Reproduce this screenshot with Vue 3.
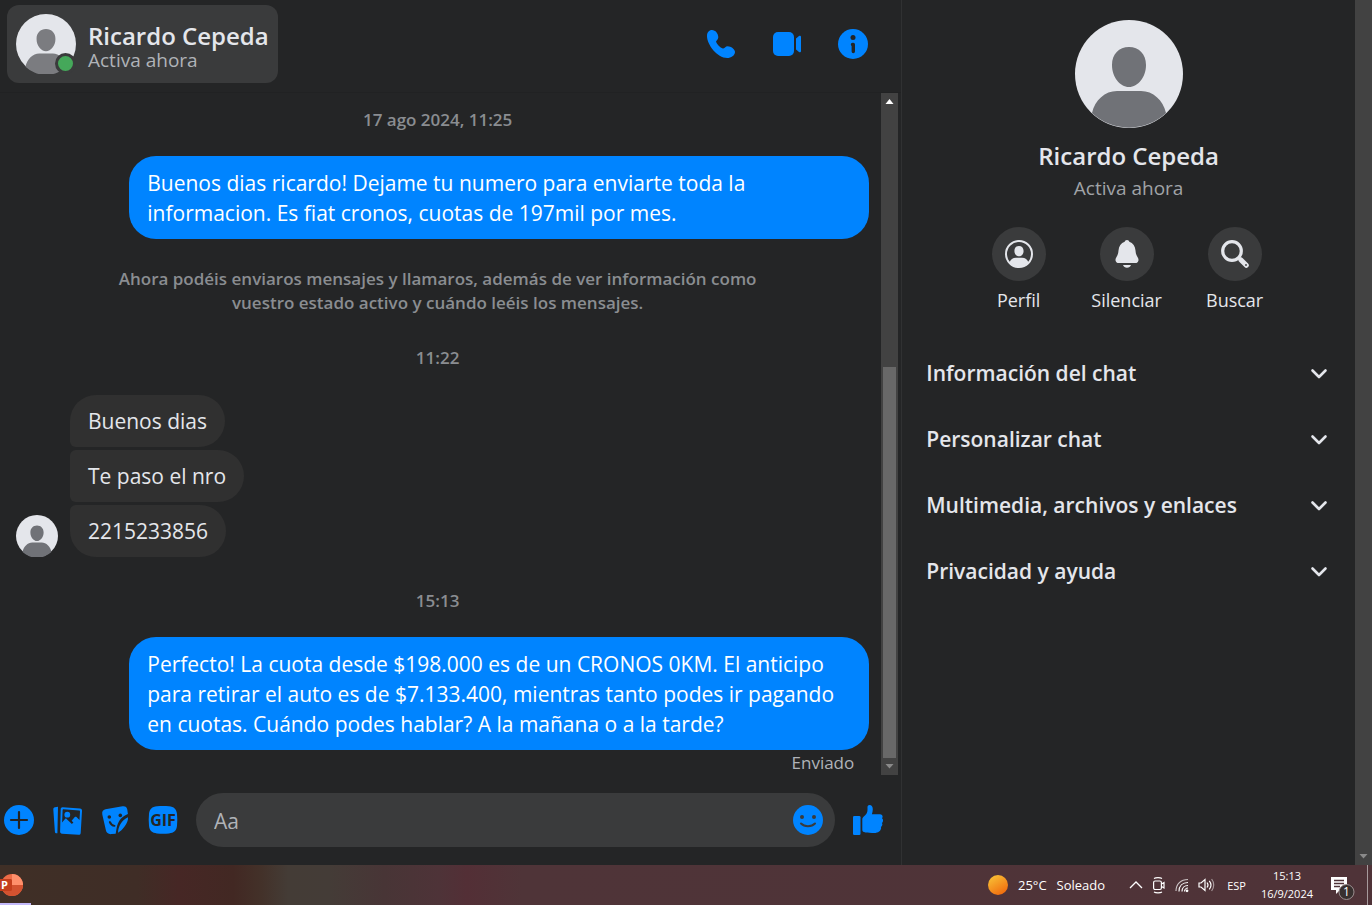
<script setup>
import { ref } from 'vue'

const contact = { name: 'Ricardo Cepeda', status: 'Activa ahora' }
const draft = ref('')

const firstMessage =
  'Buenos dias ricardo! Dejame tu numero para enviarte toda la informacion. Es fiat cronos, cuotas de 197mil por mes.'
const lastMessage =
  'Perfecto! La cuota desde $198.000 es de un CRONOS 0KM. El anticipo para retirar el auto es de $7.133.400, mientras tanto podes ir pagando en cuotas. Cuándo podes hablar? A la mañana o a la tarde?'

const received = ['Buenos dias', 'Te paso el nro', '2215233856']

const sections = ref([
  { title: 'Información del chat', open: false },
  { title: 'Personalizar chat', open: false },
  { title: 'Multimedia, archivos y enlaces', open: false },
  { title: 'Privacidad y ayuda', open: false },
])

function toggle(section) {
  section.open = !section.open
}
</script>

<template>
  <div class="screen">
    <div class="app">
      <main class="chat">
        <header class="chat__header">
          <button type="button" class="contact">
            <span class="contact__photo">
              <svg class="avatar" viewBox="0 0 108 108" aria-hidden="true">
                <circle cx="54" cy="54" r="54" fill="#e4e6eb" />
                <path fill="#7b7c80" d="M54 27c10 0 17 7 17 18 0 12-8 22-17 22s-17-10-17-22c0-11 7-18 17-18zM17 95C20 81 30 71 42 71h24c12 0 22 10 25 24a54 54 0 0 1-74 0z" />
              </svg>
              <span class="contact__dot" />
            </span>
            <span class="contact__text">
              <span class="contact__name">{{ contact.name }}</span>
              <span class="contact__status">{{ contact.status }}</span>
            </span>
          </button>
          <div class="calls">
            <button type="button" class="icon-btn" aria-label="Llamar">
              <svg width="30" height="30" viewBox="0 0 30 30">
                <path fill="#0084ff" d="M6 1c3.500 0 6.300 3.700 6.300 7.200 0 2.200-2.300 3.300-2.300 4.600 1 2.800 4 5.800 6.800 6.700 1.500.3 2.400-2.300 5-2.300 3 0 7.200 2.900 7.200 5.700 0 3.300-4 6.100-7.700 6.100C11 29 1 15.500 1 7c0-3.500 2-6 5-6z" />
              </svg>
            </button>
            <button type="button" class="icon-btn" aria-label="Videollamada">
              <svg width="30" height="30" viewBox="0 0 30 30">
                <rect x="1" y="3" width="21" height="24" rx="5" fill="#0084ff" />
                <path fill="#0084ff" d="M24 9.500 27 7c1-.6 2 0 2 1v14c0 1-1 1.600-2 1l-3-2.500z" />
              </svg>
            </button>
            <button type="button" class="icon-btn" aria-label="Información">
              <svg width="30" height="30" viewBox="0 0 30 30">
                <circle cx="15" cy="15" r="15" fill="#0084ff" />
                <circle cx="15" cy="8.500" r="2.500" fill="#242526" />
                <path d="M14.500 15.500h.8v7" fill="none" stroke="#242526" stroke-width="3.400" stroke-linecap="round" stroke-linejoin="round" />
              </svg>
            </button>
          </div>
        </header>

        <div class="thread">
          <div class="thread__list">
            <p class="stamp">17 ago 2024, 11:25</p>
            <p class="bubble bubble--sent">{{ firstMessage }}</p>
            <p class="notice">
              Ahora podéis enviaros mensajes y llamaros, además de ver información como vuestro estado activo y cuándo leéis los mensajes.
            </p>
            <p class="stamp">11:22</p>
            <div class="group">
              <svg class="group__photo avatar" viewBox="0 0 108 108" aria-hidden="true">
                <circle cx="54" cy="54" r="54" fill="#e4e6eb" />
                <path fill="#707277" d="M54 27c10 0 17 7 17 18 0 12-8 22-17 22s-17-10-17-22c0-11 7-18 17-18zM17 95C20 81 30 71 42 71h24c12 0 22 10 25 24a54 54 0 0 1-74 0z" />
              </svg>
              <div class="group__items">
                <p v-for="text in received" :key="text" class="bubble bubble--received">{{ text }}</p>
              </div>
            </div>
            <p class="stamp">15:13</p>
            <p class="bubble bubble--sent">{{ lastMessage }}</p>
            <p class="sent-state">Enviado</p>
          </div>
          <div class="scroll" aria-hidden="true">
            <svg class="scroll__arrow" viewBox="0 0 17 17"><path fill="#fff" d="M8.500 6 12.500 11h-8z" /></svg>
            <span class="scroll__space" />
            <span class="scroll__thumb" />
            <svg class="scroll__arrow" viewBox="0 0 17 17"><path fill="#8a8a8a" d="M4.500 6h8l-4 4.500z" /></svg>
          </div>
        </div>

        <form class="composer" @submit.prevent>
          <button type="button" class="icon-btn" aria-label="Más acciones">
            <svg width="30" height="30" viewBox="0 0 30 30">
              <circle cx="15" cy="15" r="15" fill="#0084ff" />
              <path d="M15 7v16M7 15h16" stroke="#242526" stroke-width="2.200" stroke-linecap="round" />
            </svg>
          </button>
          <button type="button" class="icon-btn" aria-label="Adjuntar foto">
            <svg width="30" height="30" viewBox="0 0 30 30">
              <path fill="#0084ff" d="M3 2.300 6 1.800 5.400 28.300h-.8c-1 0-1.600-.6-1.700-1.600L1.300 4.500C1.200 3.300 1.800 2.500 3 2.300z" />
              <path fill="#0084ff" d="M10.700 2.200 28 3.600c1.300.1 2.100 1 2 2.300l-1.300 22c-.1 1.300-1 2-2.200 1.900L10 28.700c-1.200-.1-2-.9-1.900-2.100L8.700 4c0-1.200.8-1.900 2-1.800z" />
              <path fill="#242526" d="M11.500 4.200 27 5.500c.7 0 1 .5 1 1.200l-.5 8.300-3-3c-.6-.5-1.200-.5-1.700.1l-3.200 3.600 1.800 1.900-1.500 1.500-5.300-5.200c-.5-.5-1.200-.4-1.600.1l-2.900 3.500.5-12.100c0-.7.300-1.200.9-1.200z" />
              <circle cx="15.300" cy="9.700" r="2.900" fill="#0084ff" />
            </svg>
          </button>
          <button type="button" class="icon-btn" aria-label="Elegir un sticker">
            <svg width="30" height="30" viewBox="0 0 30 30">
              <path fill="#0084ff" d="M5.500 4.200 22.500 1.300c2.700-.4 4.400.8 4.800 3.200l.6 4.500c-5.600 2.200-9 6.300-10.600 11.200-.8 2.600-1 5-1.600 8.500l-4.200.4c-3 .3-5-1-5.600-3.800L2.300 9.500c-.5-2.800.5-4.800 3.200-5.300z" />
              <path fill="#0084ff" d="M28 12.200c.3 3-1 6-3.600 9.500-1.800 2.500-4 4.700-6.400 6 .3-6.800 3.600-12.300 10-15.500z" />
              <circle cx="9.300" cy="12" r="1.800" fill="#242526" />
              <circle cx="20.300" cy="10.400" r="1.800" fill="#242526" />
              <path fill="none" stroke="#242526" stroke-width="1.900" stroke-linecap="round" d="M9.800 17c1 2.300 2.600 3.600 4.700 3.900" />
            </svg>
          </button>
          <button type="button" class="icon-btn" aria-label="Elegir un GIF">
            <svg width="30" height="30" viewBox="0 0 30 30">
              <path fill="#0084ff" d="M9 1.200C13 .8 17 .8 21 1.200c5 .4 7.500 2.800 8 7.600.4 4 .4 8 0 12-.5 4.800-3 7.200-8 7.600-4 .4-8 .4-12 0-5-.4-7.500-2.800-8-7.600-.4-4-.4-8 0-12 .5-4.800 3-7.200 8-7.600z" />
              <text x="15" y="21" text-anchor="middle" class="gif">GIF</text>
            </svg>
          </button>
          <div class="field">
            <input v-model="draft" class="field__input" type="text" placeholder="Aa" aria-label="Mensaje" />
            <button type="button" class="icon-btn" aria-label="Elegir un emoji">
              <svg width="30" height="30" viewBox="0 0 30 30">
                <circle cx="15" cy="15" r="15" fill="#0084ff" />
                <circle cx="9" cy="12" r="2" fill="#3a3b3c" />
                <circle cx="21" cy="12" r="2" fill="#3a3b3c" />
                <path fill="none" stroke="#3a3b3c" stroke-width="2" stroke-linecap="round" d="M8 18.500c3.500 3.500 10.500 3.500 14 0" />
              </svg>
            </button>
          </div>
          <button type="button" class="icon-btn" aria-label="Me gusta">
            <svg width="30" height="30" viewBox="0 0 30 30">
              <rect x="0" y="11" width="7.500" height="19" rx="1.300" fill="#0084ff" />
              <path fill="#0084ff" d="M9.300 14.500c0-1.300.4-2 1.500-3 2.500-2.200 3.700-3.800 3.700-6.500V2c0-1.300.9-2 2.100-2 2.100 0 3.200 2 3.200 4.200 0 1.800-.4 3.200-.9 5H27c1.600 0 2.600 1 2.600 2.300 0 .9-.2 1.300-.6 1.800.8.600 1.200 1.500 1 2.600-.1.900-.5 1.500-1.100 2 .5.700.6 1.500.3 2.400-.2.700-.7 1.200-1.300 1.600.3.700.3 1.300 0 2-1 3-3.400 4.100-8.900 4.100-4 0-6-.3-8-.9-1.200-.4-1.700-1-1.700-2.300z" />
            </svg>
          </button>
        </form>
      </main>

      <aside class="details">
        <svg class="details__photo avatar" viewBox="0 0 108 108" aria-hidden="true">
          <circle cx="54" cy="54" r="54" fill="#e4e6eb" />
          <path fill="#707277" d="M54 27c10 0 17 7 17 18 0 12-8 22-17 22s-17-10-17-22c0-11 7-18 17-18zM17 93C20 80 30 71 42 71h24c12 0 22 9 25 22a54 54 0 0 1-74 0z" />
        </svg>
        <h2 class="details__name">{{ contact.name }}</h2>
        <p class="details__status">{{ contact.status }}</p>

        <div class="actions">
          <button type="button" class="action">
            <span class="action__circle">
              <svg width="28" height="28" viewBox="0 0 28 28">
                <circle cx="14" cy="14" r="13" fill="none" stroke="#e4e6eb" stroke-width="2" />
                <path fill="#e4e6eb" d="M14 6c2.700 0 4.600 2 4.600 4.900 0 3-2 5.400-4.600 5.400s-4.600-2.400-4.600-5.400C9.400 8 11.300 6 14 6zM4.500 22.500c1-2.900 3.300-4.700 6.500-4.700h6c3.200 0 5.500 1.800 6.500 4.700A13 13 0 0 1 14 27a13 13 0 0 1-9.500-4.500z" />
              </svg>
            </span>
            Perfil
          </button>
          <button type="button" class="action">
            <span class="action__circle">
              <svg width="28" height="28" viewBox="0 0 28 28">
                <path fill="#e4e6eb" d="M14 0c1.300 0 2 .7 2.300 1.800 3.800 1.400 5.800 4.600 6.200 8.700.3 3.200.8 4.500 2 6.500.9 1.300 1.200 2.400.9 3.700-.4 1.700-1.600 2.300-2.900 2.300h-17c-1.300 0-2.500-.6-2.900-2.300-.3-1.300 0-2.400.9-3.700 1.200-2 1.700-3.300 2-6.500.4-4.100 2.400-7.300 6.200-8.700C12 .7 12.700 0 14 0zM10 25h8c-.8 1.700-2 2.700-4 2.700s-3.200-1-4-2.700z" />
              </svg>
            </span>
            Silenciar
          </button>
          <button type="button" class="action">
            <span class="action__circle">
              <svg width="28" height="28" viewBox="0 0 28 28">
                <circle cx="11" cy="11" r="9.300" fill="none" stroke="#e4e6eb" stroke-width="3.200" />
                <path stroke="#e4e6eb" stroke-width="5" stroke-linecap="round" d="m20 20 5.300 5.300" />
                <path stroke="#e4e6eb" stroke-width="3" d="m17.500 17.500 3 3" />
                <circle cx="25" cy="25" r="0.900" fill="#3a3b3c" />
              </svg>
            </span>
            Buscar
          </button>
        </div>

        <div class="sections">
          <button
            v-for="section in sections"
            :key="section.title"
            type="button"
            class="section"
            :aria-expanded="section.open"
            @click="toggle(section)"
          >
            {{ section.title }}
            <svg width="18" height="18" viewBox="0 0 18 18" aria-hidden="true">
              <path fill="none" stroke="#e4e6eb" stroke-width="2.600" stroke-linecap="round" stroke-linejoin="round" d="m2.500 6.500 6.500 6.500 6.500-6.500" />
            </svg>
          </button>
        </div>
      </aside>

      <div class="page-scroll" aria-hidden="true">
        <svg class="scroll__arrow" viewBox="0 0 17 17"><path fill="#8a8a8a" d="M4.500 6h8l-4 4.500z" /></svg>
      </div>
    </div>

    <footer class="taskbar">
      <button type="button" class="taskbar__app" aria-label="PowerPoint">
        <svg width="24" height="24" viewBox="0 0 24 24">
          <circle cx="12" cy="12" r="11" fill="#ed6c47" />
          <path fill="#ff8f6b" d="M12 1a11 11 0 0 1 11 11H12z" />
          <path fill="#d35230" d="M1 12h22a11 11 0 0 1-22 0z" />
          <path fill="#c43e1c" d="M0 6h10.500c.8 0 1.500.6 1.500 1.500v9c0 .8-.6 1.500-1.500 1.500H0z" />
          <text x="1" y="16" class="ppt">P</text>
        </svg>
      </button>
      <div class="tray">
        <div class="weather">
          <svg width="20" height="20" viewBox="0 0 20 20" aria-hidden="true">
            <defs>
              <linearGradient id="sun" x1="0.200" y1="0" x2="0.800" y2="1">
                <stop offset="0" stop-color="#f8c136" />
                <stop offset="1" stop-color="#f0670c" />
              </linearGradient>
            </defs>
            <circle cx="10" cy="10" r="10" fill="url(#sun)" />
          </svg>
          <span>25°C</span>
          <span>Soleado</span>
        </div>
        <div class="tray__icons">
          <svg width="14" height="18" viewBox="0 0 14 18"><path fill="none" stroke="#fff" stroke-width="1.300" d="m1 12 6-6 6 6" /></svg>
          <svg width="14" height="18" viewBox="0 0 14 18">
            <g fill="none" stroke="#fff" stroke-width="1.200">
              <rect x="1.600" y="5" width="7.800" height="8.500" rx="1.500" />
              <path d="m9.500 8 2.500-1.500V12l-2.500-1.500M2 2.500c2-1.200 6-1.200 8 0M2 16c2 1.200 6 1.200 8 0" />
            </g>
          </svg>
          <svg width="14" height="18" viewBox="0 0 14 18">
            <g fill="none" stroke="#fff" stroke-width="1.200">
              <path d="M1 15C1 8 6 3.500 13 3.500" opacity="0.700" />
              <path d="M4 15.500C4 10 7.500 6.500 13 6.500M7 15.500c0-3.500 2.500-6 6-6M9.500 15.500c0-1.800 1.700-3.500 3.500-3.500" />
            </g>
            <circle cx="12" cy="14.800" r="1.400" fill="#fff" />
          </svg>
          <svg width="17" height="18" viewBox="0 0 17 18">
            <g fill="none" stroke="#fff" stroke-width="1.200">
              <path d="M1 7h2l4-3.500v11L3 11H1zM9 6.500c1.200 1.500 1.200 3.500 0 5M11.300 4.800c2 2.500 2 6 0 8.500" />
              <path d="M13.600 3c2.800 3.500 2.800 8.500 0 12" opacity="0.500" />
            </g>
          </svg>
        </div>
        <span class="tray__lang">ESP</span>
        <div class="clock">
          <span>15:13</span>
          <span>16/9/2024</span>
        </div>
        <button type="button" class="notify" aria-label="Notificaciones">
          <svg width="24" height="30" viewBox="0 -5 24 30">
            <path fill="#fff" d="M0 2h16v13h-7l-4 4v-4H0z" />
            <path stroke="#4f3338" stroke-width="1.300" d="M3 5.500h10M3 8.500h10M3 11.500h6" />
            <circle cx="15.500" cy="17" r="7.500" fill="#37302f" stroke="#9b8f90" />
            <text x="15.500" y="21" text-anchor="middle" class="notify__count">1</text>
          </svg>
        </button>
        <span class="taskbar__edge" />
      </div>
    </footer>
  </div>
</template>

<style>
body {
  margin: 0;
  background: #242526;
}
</style>

<style scoped>
.screen {
  display: flex;
  flex-direction: column;
  min-height: 100vh;
  background: #242526;
  color: #e4e6eb;
  font-family: 'Segoe UI', 'Open Sans', 'Noto Sans', sans-serif;
}

.screen * {
  box-sizing: border-box;
}

button {
  padding: 0;
  border: none;
  background: none;
  color: inherit;
  font: inherit;
  cursor: pointer;
}

p,
h2 {
  margin: 0;
}

svg {
  display: block;
  flex: none;
}

.app {
  display: flex;
  flex: 1;
}

.chat {
  display: flex;
  flex: 1;
  flex-direction: column;
  min-width: 0;
  border-right: 1px solid #303132;
}

.chat__header {
  display: flex;
  align-items: center;
  justify-content: space-between;
  height: 92px;
  padding: 0 33px 4px 7px;
}

.contact {
  display: flex;
  align-items: center;
  gap: 12px;
  height: 78px;
  padding: 0 9px;
  border-radius: 12px;
  background: #3a3b3c;
  text-align: left;
}

.contact__photo {
  position: relative;
  width: 60px;
  height: 60px;
}

.avatar {
  width: 100%;
  height: auto;
}

.contact__dot {
  position: absolute;
  right: 0;
  bottom: 0;
  width: 21px;
  height: 21px;
  border: 3px solid #3a3b3c;
  border-radius: 50%;
  background: #45a85a;
}

.contact__text {
  display: flex;
  flex-direction: column;
  padding-top: 5px;
}

.contact__name {
  font-size: 24px;
  font-weight: 600;
  line-height: 26px;
}

.contact__status {
  color: #b0b3b8;
  font-size: 19px;
  line-height: 22px;
}

.calls {
  display: flex;
  gap: 36px;
}

.icon-btn {
  flex: none;
}

.thread {
  display: flex;
  flex: 1;
  padding-right: 3px;
  border-top: 1px solid #212223;
}

.thread__list {
  display: flex;
  flex: 1;
  flex-direction: column;
  min-width: 0;
  padding: 15px 6px 0 0;
}

.stamp,
.notice {
  align-self: center;
  color: #8a8d91;
  font-size: 17px;
  font-weight: 600;
  line-height: 24px;
  text-align: center;
}

.notice {
  max-width: 660px;
  margin: 28px 0 31px;
}

.bubble {
  border-radius: 27px;
  font-size: 21px;
  line-height: 30px;
}

.bubble--sent {
  align-self: flex-end;
  width: 85%;
  max-width: 740px;
  margin: 24px 6px 0 0;
  padding: 12px 18px 11px;
  background: #0084ff;
  color: #fff;
}

.group {
  display: flex;
  align-items: flex-end;
  gap: 12px;
  margin: 25px 0 32px;
  padding-left: 16px;
}

.group__photo {
  width: 42px;
}

.group__items {
  display: flex;
  flex-direction: column;
  align-items: flex-start;
  gap: 3px;
}

.bubble--received {
  padding: 11px 18px;
  border-radius: 6px 27px 27px 6px;
  background: #303030;
}

.bubble--received:first-child {
  border-top-left-radius: 27px;
}

.bubble--received:last-child {
  border-bottom-left-radius: 27px;
}

.sent-state {
  align-self: flex-end;
  padding: 1px 21px 0 0;
  color: #b0b3b8;
  font-size: 17px;
  line-height: 24px;
}

.scroll {
  display: flex;
  flex-direction: column;
  width: 17px;
  background: #424242;
}

.scroll__arrow {
  width: 17px;
  height: 17px;
}

.scroll__space {
  flex: 257;
}

.scroll__thumb {
  flex: 392;
  margin: 0 2px;
  background: #686868;
}

.composer {
  display: flex;
  align-items: center;
  gap: 18px;
  height: 90px;
  padding: 0 18px 0 4px;
}

.gif {
  fill: #242526;
  font-size: 16px;
  font-weight: 700;
}

.field {
  display: flex;
  flex: 1;
  align-items: center;
  height: 54px;
  min-width: 0;
  padding: 0 12px 0 18px;
  border-radius: 27px;
  background: #3a3b3c;
}

.field__input {
  flex: 1;
  min-width: 0;
  padding: 2px 0 0;
  border: none;
  outline: none;
  background: none;
  color: #e4e6eb;
  font: inherit;
  font-size: 21px;
}

.field__input::placeholder {
  color: #b0b3b8;
  opacity: 1;
}

.details {
  display: flex;
  flex: 0 0 33%;
  flex-direction: column;
  align-items: center;
  padding-top: 20px;
}

.details__photo {
  width: 108px;
}

.details__name {
  margin-top: 12px;
  font-size: 24px;
  font-weight: 600;
  line-height: 32px;
}

.details__status {
  margin-top: 4px;
  color: #a0a3a7;
  font-size: 19px;
  line-height: 24px;
}

.actions {
  display: flex;
  margin: 27px 0 0;
  padding-right: 4px;
}

.action {
  display: flex;
  flex-direction: column;
  align-items: center;
  gap: 7px;
  width: 108px;
  font-size: 18px;
  line-height: 24px;
}

.action__circle {
  display: grid;
  place-items: center;
  width: 54px;
  height: 54px;
  border-radius: 50%;
  background: #3a3b3c;
}

.sections {
  width: 100%;
  margin-top: 28px;
}

.section {
  display: flex;
  align-items: center;
  justify-content: space-between;
  width: 100%;
  height: 66px;
  padding: 0 27px 0 24px;
  font-size: 21px;
  font-weight: 600;
  text-align: left;
}

.page-scroll {
  display: flex;
  flex-direction: column;
  justify-content: flex-end;
  width: 17px;
  background: #424242;
}

.taskbar {
  display: flex;
  justify-content: space-between;
  height: 40px;
  background: linear-gradient(90deg, #3f2f26 0, #3f2d26 10%, #462725 13%, #422823 17%, #433129 19%, #443c36 21%, #443c37 24%, #483536 28%, #4e3338 32%, #532f36 34%, #4f3438 38%, #4f3338 100%);
  color: #fff;
  font-size: 13px;
}

.taskbar__app {
  display: flex;
  align-items: center;
  width: 31px;
  padding-top: 2px;
  border-bottom: 2px solid #c3b9fa;
}

.tray {
  display: flex;
  align-items: center;
}

.weather {
  display: flex;
  align-items: center;
  gap: 10px;
}

.tray__icons {
  display: flex;
  align-items: center;
  gap: 9px;
  margin: 0 12px 0 24px;
}

.tray__lang {
  font-size: 11px;
}

.clock {
  display: flex;
  flex-direction: column;
  align-items: center;
  margin: 0 18px 0 15px;
  font-size: 11px;
  line-height: 18px;
}

.notify__count {
  fill: #fff;
  font-size: 12px;
}

.taskbar__edge {
  align-self: stretch;
  width: 5px;
  margin-left: 12px;
  border-left: 1px solid #a69a9c;
}

.ppt {
  fill: #fff;
  font-size: 11px;
  font-weight: 700;
}
</style>
